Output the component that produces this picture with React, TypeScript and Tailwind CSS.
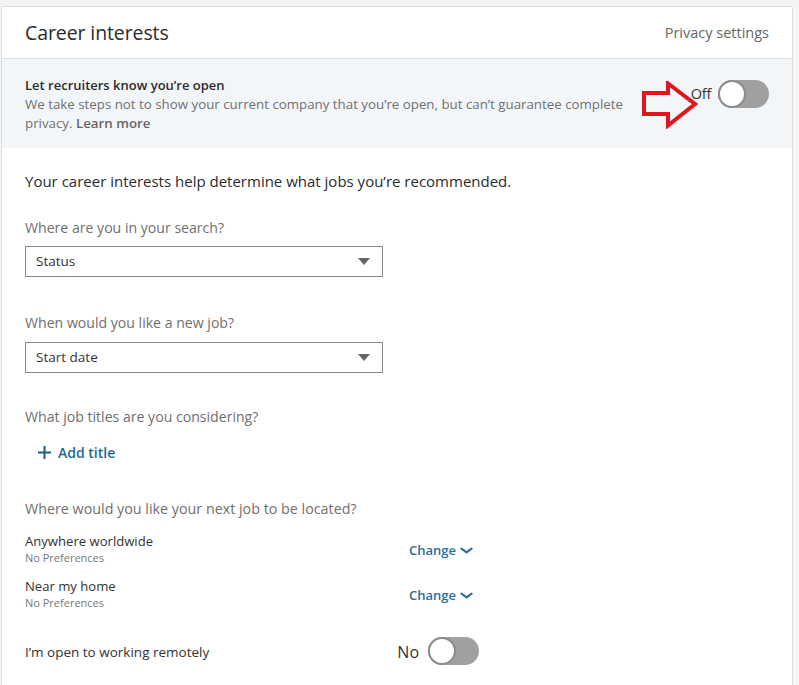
import React from "react";

const Toggle = () => (
  <div className="relative w-[51px] h-[28px] rounded-full bg-[#a0a0a0] shrink-0">
    <div className="absolute left-0 top-0 w-[28px] h-[28px] rounded-full bg-white border-2 border-[#8c8c8c]" />
  </div>
);

const Select = ({ label }: { label: string }) => (
  <div className="w-[358px] h-[31px] border border-[#8a8a8a] flex items-center justify-between pl-[10px] pr-[12px] text-[13.5px] text-[#333]">
    <span>{label}</span>
    <svg width="12" height="7" viewBox="0 0 12 7">
      <path d="M0 0 L12 0 L6 7 Z" fill="#666" />
    </svg>
  </div>
);

const Chevron = () => (
  <svg width="13" height="8" viewBox="0 0 14 8" className="ml-[4px]">
    <path d="M1.5 1.5 L7 5.5 L12.5 1.5" fill="none" stroke="#2a6d98" strokeWidth="2.2" strokeLinecap="round" strokeLinejoin="round" />
  </svg>
);

export default function App() {
  return (
    <div
      className="w-[799px] h-[685px] bg-[#f4f4f4] pt-[6px] pl-[1px] overflow-hidden"
      style={{ fontFamily: '"Open Sans", "Noto Sans", sans-serif' }}
    >
      <div className="w-[792px] h-[700px] bg-white border border-[#dcdcdc] rounded-t-[2px]">
        <div className="h-[52px] flex items-center justify-between pl-[23px] pr-[23px] border-b border-[#e0e0e0]">
          <h1 className="text-[19.5px] text-[#2b2b2b] tracking-[-0.1px] mt-[1px]">Career interests</h1>
          <span className="text-[14.5px] text-[#666] mt-[1px]">Privacy settings</span>
        </div>
        <div className="bg-[#f3f6f8] h-[89px] pl-[23px] pr-[23px] pt-[16px] flex justify-between relative">
          <div className="w-[610px]">
            <div className="text-[13px] font-semibold text-[#2b2b2b] leading-[20px]">Let recruiters know you’re open</div>
            <div className="text-[13.3px] text-[#707070] leading-[19px]">
              We take steps not to show your current company that you’re open, but can’t guarantee complete privacy.{" "}
              <span className="font-semibold text-[#666]">Learn more</span>
            </div>
          </div>
          <div className="flex items-center h-[28px] mt-[5px] gap-[7px]">
            <span className="text-[14.5px] text-[#333] tracking-[-0.3px]">Off</span>
            <Toggle />
          </div>
          <svg className="absolute left-[638px] top-[22px]" width="62" height="48" viewBox="0 0 62 48">
            <path d="M4 12 L28 12 L28 2.5 L55 23 L28 44.5 L28 33 L4 33 Z" fill="none" stroke="#e0161e" strokeWidth="4" strokeLinejoin="miter" />
          </svg>
        </div>
        <div className="pl-[23px] pr-[23px]">
          <p className="mt-[22px] text-[15px] text-[#2b2b2b] leading-[22px]">Your career interests help determine what jobs you’re recommended.</p>
          <p className="mt-[26px] text-[14.1px] text-[#707070] leading-[20px]">Where are you in your search?</p>
          <div className="mt-[8px]"><Select label="Status" /></div>
          <p className="mt-[36px] text-[14.1px] text-[#707070] leading-[20px]">When would you like a new job?</p>
          <div className="mt-[9px]"><Select label="Start date" /></div>
          <p className="mt-[34px] text-[14.1px] text-[#707070] leading-[20px]">What job titles are you considering?</p>
          <div className="mt-[15px] ml-[13px] flex items-center text-[14px] font-semibold text-[#1b6a93]">
            <svg width="13" height="13" viewBox="0 0 13 13" className="mr-[7px]">
              <path d="M6.5 0 V13 M0 6.5 H13" stroke="#1b5f84" strokeWidth="2" />
            </svg>
            Add title
          </div>
          <p className="mt-[36px] text-[14.3px] text-[#707070] leading-[20px]">Where would you like your next job to be located?</p>
          <div className="mt-[14px] w-[448px] flex items-center justify-between">
            <div>
              <div className="text-[13.1px] text-[#333] leading-[17px]">Anywhere worldwide</div>
              <div className="text-[11px] text-[#777] leading-[16px]">No Preferences</div>
            </div>
            <div className="flex items-center text-[13px] font-semibold text-[#2a6d98] mt-[2px]">Change<Chevron /></div>
          </div>
          <div className="mt-[12px] w-[448px] flex items-center justify-between">
            <div>
              <div className="text-[13.1px] text-[#333] leading-[17px]">Near my home</div>
              <div className="text-[11px] text-[#777] leading-[16px]">No Preferences</div>
            </div>
            <div className="flex items-center text-[13px] font-semibold text-[#2a6d98] mt-[2px]">Change<Chevron /></div>
          </div>
          <div className="mt-[26px] w-[454px] flex items-center justify-between">
            <div className="text-[13.5px] text-[#333] mt-[3px]">I’m open to working remotely</div>
            <div className="flex items-center gap-[9px]">
              <span className="text-[16px] text-[#333] mt-[2px]">No</span>
              <Toggle />
            </div>
          </div>
        </div>
      </div>
    </div>
  );
}
